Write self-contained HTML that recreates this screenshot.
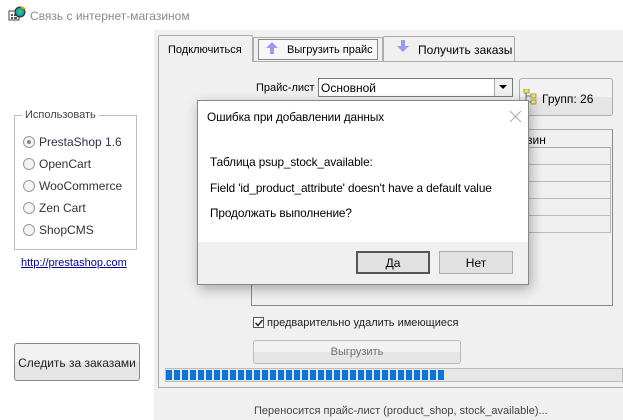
<!DOCTYPE html>
<html><head><meta charset="utf-8"><style>
*{margin:0;padding:0;box-sizing:border-box}
body{width:623px;height:420px;background:#fff;position:relative;overflow:hidden;font-family:"Liberation Sans","DejaVu Sans",sans-serif;font-size:11px;color:#000}
.a{position:absolute}
.gray{background:#f0f0f0}
.btn{position:absolute;border:1px solid #adadad;border-radius:3px;background:linear-gradient(#f2f2f2 50%,#e5e5e5 50%);text-align:center}
.rad{position:absolute;width:12px;height:12px;border:1px solid #9a9a9a;border-radius:50%;background:#f4f4f4}
.dt{font-size:11.8px;letter-spacing:-0.1px}
</style></head><body>
<svg class="a" style="left:8px;top:6px" width="18" height="16" viewBox="0 0 18 16">
<rect x="1" y="5" width="10" height="9" fill="#fff" stroke="#444"/>
<rect x="3" y="8" width="2" height="2" fill="#555"/><rect x="6" y="8" width="3" height="2" fill="#555"/><rect x="3" y="11" width="2" height="2" fill="#555"/><rect x="6" y="11" width="3" height="2" fill="#555"/>
<circle cx="12" cy="6" r="5" fill="#1a8fd0" stroke="#224"/><path d="M9 4 L13 3 L15 7 L11 9Z" fill="#3c3"/><path d="M13 1 L17 3" stroke="#d90" stroke-width="2"/>
</svg>
<div class="a" style="left:30px;top:9px;font-size:12px;color:#8a8a8a">Связь с интернет-магазином</div>

<div class="a gray" style="left:154px;top:30px;width:469px;height:390px"></div>
<div class="a" style="left:158px;top:61px;width:470px;height:327px;border:1px solid #adadad;background:#f0f0f0"></div>
<div class="a" style="left:158px;top:35px;width:95px;height:27px;border:1px solid #adadad;border-bottom:none;border-radius:2px 2px 0 0;background:#f0f0f0;padding:8px 0 0 9px">Подключиться</div>
<div class="a" style="left:253px;top:37px;width:130px;height:24px;border:1px solid #adadad;border-bottom:none;background:#f0f0f0"></div>
<div class="a" style="left:258px;top:39px;width:120px;height:21px;border:1px solid #888;background:#f7f7f7;padding:4px 0 0 28px">Выгрузить прайс</div>
<svg class="a" style="left:266px;top:42px" width="12" height="12"><path d="M6 0 L12 6 H8 V12 H4 V6 H0Z" fill="#9a9af0"/></svg>
<div class="a" style="left:383px;top:36px;width:132px;height:25px;border:1px solid #adadad;border-bottom:none;border-radius:2px 2px 0 0;background:#f0f0f0;padding:6px 0 0 34px;font-size:12px">Получить заказы</div>
<svg class="a" style="left:397px;top:40px" width="12" height="12"><path d="M6 12 L12 6 H8 V0 H4 V6 H0Z" fill="#9a9af0"/></svg>

<div class="a" style="left:256px;top:82px;font-size:11px">Прайс-лист</div>
<div class="a" style="left:318px;top:78px;width:195px;height:19px;border:1px solid #7a7a7a;background:#fff;padding:2px 0 0 2px;font-size:12px">Основной</div>
<div class="a" style="left:494px;top:79px;width:18px;height:17px;border-left:1px solid #aaa;background:#f0f0f0"></div>
<svg class="a" style="left:499px;top:85px" width="8" height="5"><path d="M0 0H8L4 4Z" fill="#000"/></svg>
<div class="btn" style="left:519px;top:78px;width:94px;height:38px;padding-top:13px;padding-left:22px;text-align:left;font-size:12px">Групп: 26</div>
<svg class="a" style="left:523px;top:89px" width="14" height="16"><rect x="1" y="0" width="5" height="4" fill="#ee4" stroke="#885" stroke-width=".8"/><rect x="8" y="5" width="5" height="4" fill="#ee4" stroke="#885" stroke-width=".8"/><rect x="8" y="11" width="5" height="4" fill="#ee4" stroke="#885" stroke-width=".8"/><path d="M3 4V13H8M3 7H8" stroke="#666" fill="none"/></svg>

<div class="a" style="left:251px;top:129px;width:362px;height:177px;border:1px solid #888;border-top-color:#aaa"></div>
<div class="a" style="left:252px;top:130px;width:359px;height:18px;border-bottom:1px solid #aaa;background:#f0f0f0;padding:3px 0 0 275px;font-size:12px">зин</div>
<div class="a" style="left:252px;top:148px;width:359px;height:85px;border-right:1px solid #bbb;background:repeating-linear-gradient(#f0f0f0 0 16px,#bbb 16px 17px)"></div>

<div class="a" style="left:253px;top:317px;width:11px;height:11px;border:1px solid #555;background:#fff"></div>
<svg class="a" style="left:255px;top:319px" width="8" height="8"><path d="M0.5 4 L3 6.5 L7.5 1" stroke="#333" stroke-width="1.6" fill="none"/></svg>
<div class="a" style="left:267px;top:317px;color:#222">предварительно удалить имеющиеся</div>
<div class="btn" style="left:253px;top:340px;width:208px;height:24px;padding-top:5px;color:#6d6d6d;border-color:#bcbcbc">Выгрузить</div>
<div class="a" style="left:165px;top:368px;width:458px;height:14px;border:1px solid #bcbcbc;background:#e6e6e6"></div>
<div class="a" style="left:166px;top:370px;width:278px;height:10px;background:repeating-linear-gradient(90deg,#0a74d9 0 6px,#e6e6e6 6px 8px)"></div>
<div class="a" style="left:254px;top:405px;color:#444;font-size:11px">Переносится прайс-лист (product_shop, stock_available)...</div>

<div class="a" style="left:14px;top:115px;width:123px;height:135px;border:1px solid #bdbdbd"></div>
<div class="a" style="left:22px;top:109px;background:#fff;padding:0 3px;color:#444">Использовать</div>
<div class="rad" style="left:23px;top:136px"></div><div class="a" style="left:27px;top:140px;width:4px;height:4px;border-radius:50%;background:#888"></div>
<div class="a" style="left:39px;top:135px;color:#3b2a4a;font-size:12px">PrestaShop 1.6</div>
<div class="rad" style="left:23px;top:158px"></div><div class="a" style="left:39px;top:157px;color:#333;font-size:12px">OpenCart</div>
<div class="rad" style="left:23px;top:180px"></div><div class="a" style="left:39px;top:179px;color:#333;font-size:12px">WooCommerce</div>
<div class="rad" style="left:23px;top:202px"></div><div class="a" style="left:39px;top:201px;color:#333;font-size:12px">Zen Cart</div>
<div class="rad" style="left:23px;top:224px"></div><div class="a" style="left:39px;top:223px;color:#333;font-size:12px">ShopCMS</div>
<div class="a" style="left:21px;top:257px;color:#0000a0;text-decoration:underline;font-size:11px">http://prestashop.com</div>
<div class="btn" style="left:14px;top:343px;width:126px;height:38px;padding-top:12px;font-size:12px;color:#222;border-color:#888">Следить за заказами</div>

<div class="a" style="left:197px;top:100px;width:332px;height:185px;border:1px solid #888;background:#fff;box-shadow:2px 4px 12px rgba(0,0,0,.3)">
 <div class="a dt" style="left:9px;top:9px">Ошибка при добавлении данных</div>
 <svg class="a" style="left:312px;top:10px" width="11" height="11"><path d="M0 0L11 11M11 0L0 11" stroke="#aaa" stroke-width="1"/></svg>
 <div class="a dt" style="left:12px;top:54px">Таблица psup_stock_available:</div>
 <div class="a dt" style="left:12px;top:80px">Field 'id_product_attribute' doesn't have a default value</div>
 <div class="a dt" style="left:12px;top:105px">Продолжать выполнение?</div>
 <div class="a gray" style="left:0;top:141px;width:330px;height:42px"></div>
 <div class="a" style="left:158px;top:150px;width:74px;height:23px;border:2px solid #555;background:#e1e1e1;text-align:center;padding-top:3px;font-size:12px">Да</div>
 <div class="a" style="left:241px;top:150px;width:74px;height:23px;border:1px solid #adadad;background:#e1e1e1;text-align:center;padding-top:4px;font-size:12px">Нет</div>
</div>
</body></html>
